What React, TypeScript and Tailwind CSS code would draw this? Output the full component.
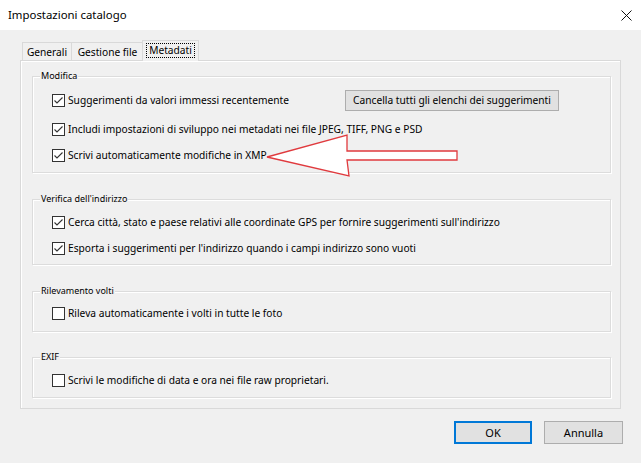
import React from "react";

function Check({ checked }: { checked: boolean }) {
  return (
    <span className="w-[13px] h-[13px] border border-[#333333] bg-white flex items-center justify-center shrink-0">
      {checked && (
        <svg width="11" height="11" viewBox="0 0 11 11">
          <polyline points="1.5,5.5 4,8 9.5,2.5" fill="none" stroke="#333333" strokeWidth="1.1" />
        </svg>
      )}
    </span>
  );
}

function Row({ checked, text, className = "", children }: { checked: boolean; text: string; className?: string; children?: React.ReactNode }) {
  return (
    <div className={`h-[22px] flex items-center pl-[19px] ${className}`}>
      <Check checked={checked} />
      <span className="ml-[3px] text-[10.2px] leading-[14px] text-black whitespace-nowrap">{text}</span>
      {children}
    </div>
  );
}

function Group({ label, className, children }: { label: string; className: string; children: React.ReactNode }) {
  return (
    <div className={`relative w-[579px] border border-[#dcdcdc] shadow-[inset_1px_1px_0_#ffffff,1px_1px_0_#ffffff] ${className}`}>
      <span className="absolute left-[7px] top-[-7px] px-[1px] bg-[#f0f0f0] text-[9px] leading-[12px] text-black whitespace-nowrap">
        {label}
      </span>
      {children}
    </div>
  );
}

export default function App() {
  return (
    <div className="w-[641px] h-[463px] bg-[#f0f0f0] overflow-hidden relative font-['Noto_Sans',sans-serif] text-black">
      <div className="h-[30px] bg-white flex items-center justify-between pl-[8px] pr-[9px]">
        <span className="text-[11.4px] leading-[16px]">Impostazioni catalogo</span>
        <svg width="11" height="11" viewBox="0 0 11 11">
          <line x1="0.5" y1="0.5" x2="10.5" y2="10.5" stroke="#111" strokeWidth="1" />
          <line x1="10.5" y1="0.5" x2="0.5" y2="10.5" stroke="#111" strokeWidth="1" />
        </svg>
      </div>

      <div className="mt-[10px] h-[20px] flex items-end pl-[22px]">
        <div className="w-[50px] h-[18px] border border-b-0 border-[#d9d9d9] flex items-center justify-center text-[10.2px] leading-[14px]">
          Generali
        </div>
        <div className="w-[72px] h-[18px] border border-l-0 border-b-0 border-[#d9d9d9] flex items-center justify-center text-[10.2px] leading-[14px]">
          Gestione file
        </div>
        <div className="relative z-10 -ml-[2px] -mb-px w-[57px] h-[21px] bg-[#f0f0f0] border border-b-0 border-[#d9d9d9] flex items-start justify-center pt-[2px]">
          <span className="border border-dotted border-black px-[2px] text-[10.2px] leading-[13px]">Metadati</span>
        </div>
      </div>

      <div className="ml-[20px] w-[601px] h-[349px] border border-[#d9d9d9] shadow-[inset_1px_1px_0_#ffffff] pl-[11px] pt-[15px] flex flex-col">
        <Group label="Modifica" className="h-[97px] pt-[12px]">
          <div className="flex items-center justify-between pr-[51px]">
            <Row checked text="Suggerimenti da valori immessi recentemente" />
            <button className="w-[214px] h-[21px] bg-[#e1e1e1] border border-[#adadad] text-[10.2px] leading-[14px] text-black">
              Cancella tutti gli elenchi dei suggerimenti
            </button>
          </div>
          <Row checked className="mt-[7px]" text="Includi impostazioni di sviluppo nei metadati nei file JPEG, TIFF, PNG e PSD" />
          <Row checked className="mt-[4px]" text="Scrivi automaticamente modifiche in XMP" />
        </Group>

        <Group label="Verifica dell'indirizzo" className="mt-[26px] h-[66px] pt-[11px]">
          <Row checked text="Cerca città, stato e paese relativi alle coordinate GPS per fornire suggerimenti sull'indirizzo" />
          <Row checked className="mt-[4px]" text="Esporta i suggerimenti per l'indirizzo quando i campi indirizzo sono vuoti" />
        </Group>

        <Group label="Rilevamento volti" className="mt-[26px] h-[41px] pt-[10px]">
          <Row checked={false} text="Rileva automaticamente i volti in tutte le foto" />
        </Group>

        <Group label="EXIF" className="mt-[25px] h-[41px] pt-[11px]">
          <Row checked={false} text="Scrivi le modifiche di data e ora nei file raw proprietari." />
        </Group>
      </div>

      <div className="mt-[12px] flex justify-end gap-[12px] pr-[18px]">
        <button className="w-[78px] h-[23px] bg-[#e1e1e1] border border-[#0078d7] shadow-[inset_0_0_0_1px_#0078d7] text-[11px] leading-[15px] text-black">
          OK
        </button>
        <button className="w-[79px] h-[23px] bg-[#e1e1e1] border border-[#adadad] text-[11px] leading-[15px] text-black">
          Annulla
        </button>
      </div>

      <svg className="absolute left-0 top-0 pointer-events-none" width="641" height="463" viewBox="0 0 641 463">
        <polygon
          points="267,157 347,135 347,151 457,151 457,160 347,160 349,176"
          fill="#ffffff"
          stroke="#e03a3e"
          strokeWidth="1.3"
          strokeLinejoin="miter"
        />
      </svg>
    </div>
  );
}
